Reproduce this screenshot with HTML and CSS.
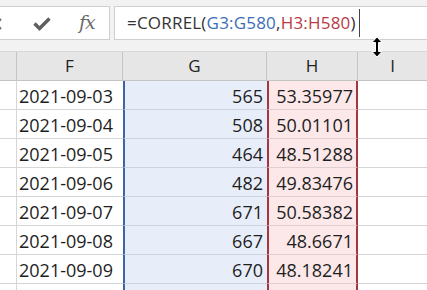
FILE: index.html
```html
<!DOCTYPE html>
<html>
<head>
<meta charset="utf-8">
<link rel="stylesheet" href="styles.css">
</head>
<body>
<div class="app">
  <div class="toolbar">
    <div class="iconbox">
      <svg class="ico-x" width="14" height="14" viewBox="0 0 14 14"><path d="M2 2 L12 12 M12 2 L2 12" stroke="#6a6a6a" stroke-width="2" fill="none"/></svg>
      <svg class="ico-check" width="18" height="14" viewBox="0 0 18 14"><path d="M1.5 6.5 L6.5 11.5 L16.5 1.5" stroke="#5f5f5f" stroke-width="3.4" fill="none" stroke-linejoin="miter"/></svg>
      <span class="ico-fx">fx</span>
    </div>
    <div class="formula"><span class="fdark">=CORREL(</span><span class="fblue">G3:G580</span><span class="fdark">,</span><span class="fred">H3:H580</span><span class="fdark">)</span><span class="caret"></span></div>
  </div>
  <div class="sheet">
    <div class="hd e"></div><div class="hd f">F</div><div class="hd g">G</div><div class="hd h">H</div><div class="hd i">I</div>

    <div class="c e"></div><div class="c f">2021-09-03</div><div class="c g">565</div><div class="c h">53.35977</div><div class="c i"></div>
    <div class="c e"></div><div class="c f">2021-09-04</div><div class="c g">508</div><div class="c h">50.01101</div><div class="c i"></div>
    <div class="c e"></div><div class="c f">2021-09-05</div><div class="c g">464</div><div class="c h">48.51288</div><div class="c i"></div>
    <div class="c e"></div><div class="c f">2021-09-06</div><div class="c g">482</div><div class="c h">49.83476</div><div class="c i"></div>
    <div class="c e"></div><div class="c f">2021-09-07</div><div class="c g">671</div><div class="c h">50.58382</div><div class="c i"></div>
    <div class="c e"></div><div class="c f">2021-09-08</div><div class="c g">667</div><div class="c h">48.6671</div><div class="c i"></div>
    <div class="c e"></div><div class="c f">2021-09-09</div><div class="c g">670</div><div class="c h">48.18241</div><div class="c i"></div>
    <div class="c e"></div><div class="c f"></div><div class="c g"></div><div class="c h"></div><div class="c i"></div>
  </div>
  <svg class="resize" width="14" height="22" viewBox="0 0 14 22"><path d="M7 1 L12 6.5 L8.5 6.5 L8.5 15.5 L12 15.5 L7 21 L2 15.5 L5.5 15.5 L5.5 6.5 L2 6.5 Z" fill="#000" stroke="#fff" stroke-width="1"/></svg>
</div>
</body>
</html>
```
FILE: styles.css
```css
html, body {
  margin: 0;
  padding: 0;
  background: #fff;
}
.app {
  position: relative;
  width: 427px;
  height: 290px;
  overflow: hidden;
  font-family: "Open Sans", "Noto Sans", sans-serif;
}
.toolbar {
  display: flex;
  height: 52px;
  padding-top: 6px;
  box-sizing: border-box;
  background: #f2f2f2;
  border-bottom: 1px solid #d8d8d8;
}
.iconbox {
  position: relative;
  width: 110px;
  height: 34px;
  box-sizing: border-box;
  background: #fff;
  border: 1px solid #cfcfcf;
  border-left: none;
  overflow: hidden;
}
.ico-x {
  position: absolute;
  left: -11px;
  top: 10px;
}
.ico-check {
  position: absolute;
  left: 33px;
  top: 10px;
}
.ico-fx {
  position: absolute;
  left: 79px;
  top: 3px;
  font-family: "DejaVu Serif", "Liberation Serif", serif;
  font-style: italic;
  font-size: 19px;
  line-height: 24px;
  color: #6a6a6a;
  letter-spacing: -1px;
}
.formula {
  flex: 1;
  margin-left: 4px;
  height: 34px;
  box-sizing: border-box;
  background: #fff;
  border: 1px solid #cfcfcf;
  border-right: none;
  padding-left: 12px;
  font-size: 17px;
  letter-spacing: 0.2px;
  line-height: 32px;
  white-space: nowrap;
  display: flex;
  align-items: flex-start;
}
.fdark { color: #333; }
.fblue { color: #3a6eb5; }
.fred { color: #b83a45; }
.caret {
  display: inline-block;
  width: 1px;
  height: 28px;
  margin-top: 2px;
  margin-left: 3px;
  background: #444;
}
.sheet {
  display: grid;
  grid-template-columns: 17px 106px 144px 91px 1fr;
  grid-auto-rows: 29px;
}
.hd {
  box-sizing: border-box;
  background: #e6e6e6;
  border-right: 1px solid #c4c4c4;
  border-bottom: 1px solid #c4c4c4;
  text-align: center;
  font-size: 17px;
  line-height: 28px;
  color: #222;
}
.hd.i { border-right: none; }
.c {
  box-sizing: border-box;
  border-bottom: 1px solid #d6d6d6;
  font-size: 18px;
  line-height: 25px;
  padding-top: 3px;
  color: #1e1e1e;
  white-space: nowrap;
  overflow: hidden;
}
.c.e {
  border-right: 1px solid #d6d6d6;
}
.c.f {
  padding-left: 2px;
}
.c.g {
  background: #e8eef9;
  border-left: 2px solid #3f64a3;
  border-bottom-color: #cdd3de;
  text-align: right;
  padding-right: 4px;
}
.c.h {
  background: #fce8e9;
  border-left: 2px solid #a3363f;
  border-right: 2px solid #a3363f;
  border-bottom-color: #e0cfd0;
  text-align: right;
  padding-right: 3px;
}
.resize {
  position: absolute;
  left: 370px;
  top: 36px;
}
```
